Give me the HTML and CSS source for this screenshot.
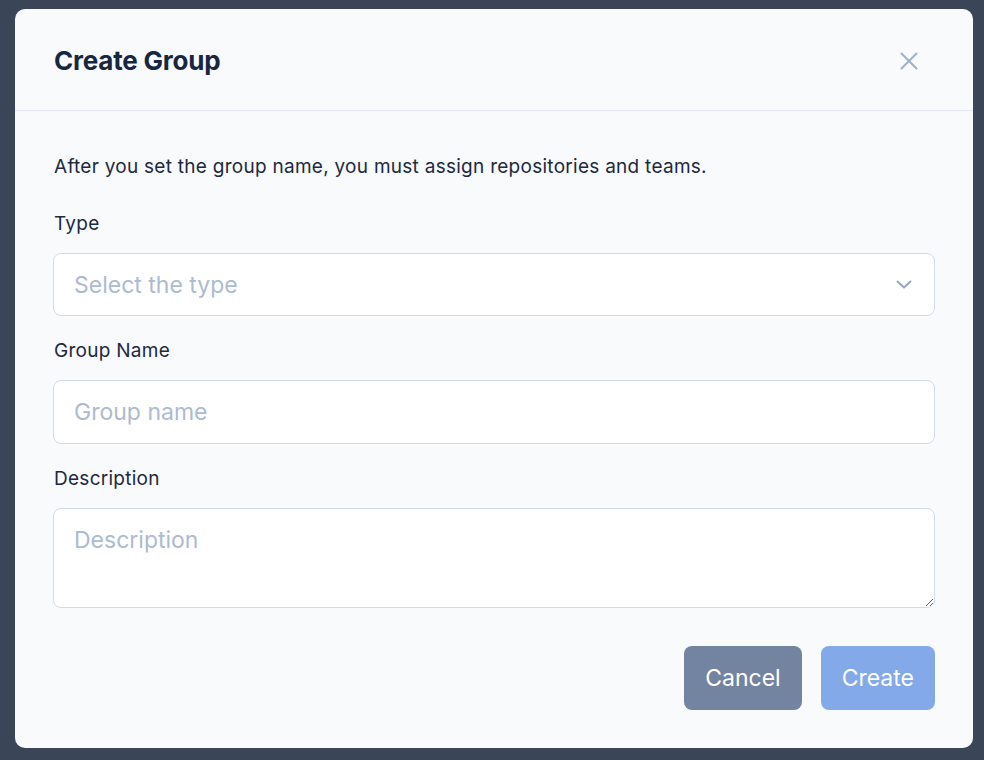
FILE: index.html
```html
<!DOCTYPE html>
<html lang="en">
<head>
<meta charset="utf-8">
<title>Create Group</title>
<link rel="stylesheet" href="styles.css">
</head>
<body>
<div class="modal">
  <div class="modal-header">
    <h2 class="modal-title">Create Group</h2>
    <button class="close-btn" aria-label="Close">
      <svg width="18" height="18" viewBox="0 0 18 18" fill="none" stroke="currentColor" stroke-width="2" stroke-linecap="round"><path d="M1.5 1.5L16.5 16.5M16.5 1.5L1.5 16.5"/></svg>
    </button>
  </div>
  <div class="modal-body">
    <p class="intro">After you set the group name, you must assign repositories and teams.</p>
    <div class="field">
      <label class="label">Type</label>
      <div class="select">
        <span class="placeholder">Select the type</span>
        <svg class="chevron" width="16" height="9" viewBox="0 0 16 9" fill="none" stroke="currentColor" stroke-width="2" stroke-linecap="round" stroke-linejoin="round"><path d="M1.5 1.5L8 7.5L14.5 1.5"/></svg>
      </div>
    </div>
    <div class="field">
      <label class="label">Group Name</label>
      <input class="input" type="text" placeholder="Group name">
    </div>
    <div class="field">
      <label class="label">Description</label>
      <textarea class="textarea" placeholder="Description"></textarea>
    </div>
    <div class="actions">
      <button class="btn btn-cancel">Cancel</button>
      <button class="btn btn-create">Create</button>
    </div>
  </div>
</div>
</body>
</html>
```
FILE: styles.css
```css
* { box-sizing: border-box; }
html, body { margin: 0; padding: 0; }
body {
  background: #3a4558;
  width: 984px;
  height: 760px;
  padding: 9px 0 0 15px;
  font-family: "Inter", "Lato", sans-serif;
  color: #1c2940;
  overflow: hidden;
}
.modal {
  width: 958px;
  height: 739px;
  background: #f8fafc;
  border-radius: 10px;
  overflow: hidden;
}
.modal-header {
  height: 102px;
  border-bottom: 1px solid #e3e8f0;
  display: flex;
  align-items: center;
  justify-content: space-between;
  padding: 2px 55px 0 39px;
}
.modal-title {
  margin: 0;
  font-size: 26px;
  font-weight: 700;
  color: #172741;
  letter-spacing: -0.2px;
}
.close-btn {
  background: none;
  border: 0;
  padding: 0;
  color: #9fb0c9;
  display: flex;
  cursor: pointer;
}
.modal-body {
  padding: 41px 38px 38px 38px;
}
.intro {
  margin: 0 0 27px 1px;
  font-size: 19px;
  line-height: 30px;
  letter-spacing: 0.27px;
}
.field { margin-bottom: 20px; }
.label {
  display: block;
  margin: 0 0 14px 1px;
  font-size: 19px;
  line-height: 30px;
  letter-spacing: 0.27px;
}
.select, .input, .textarea {
  width: 100%;
  background: #ffffff;
  border: 1px solid #d3dbe8;
  border-radius: 8px;
  font-family: inherit;
  font-size: 23px;
  color: #1c2940;
}
.select {
  height: 63px;
  display: flex;
  align-items: center;
  justify-content: space-between;
  padding: 0 22px 0 20px;
}
.placeholder { color: #acbbd2; }
.chevron { color: #97a6c0; }
.input {
  height: 64px;
  padding: 0 20px;
  outline: none;
}
.textarea {
  display: block;
  height: 100px;
  padding: 17px 20px;
  resize: vertical;
  outline: none;
}
.input::placeholder, .textarea::placeholder { color: #acbbd2; }
.actions {
  display: flex;
  justify-content: flex-end;
  gap: 19px;
  margin-top: 38px;
}
.btn {
  height: 64px;
  border: 0;
  border-radius: 8px;
  padding: 0 21px;
  font-family: inherit;
  font-size: 23px;
  color: #ffffff;
  cursor: pointer;
}
.btn-cancel { background: #7384a0; }
.btn-create { background: #84a9e8; }
```
